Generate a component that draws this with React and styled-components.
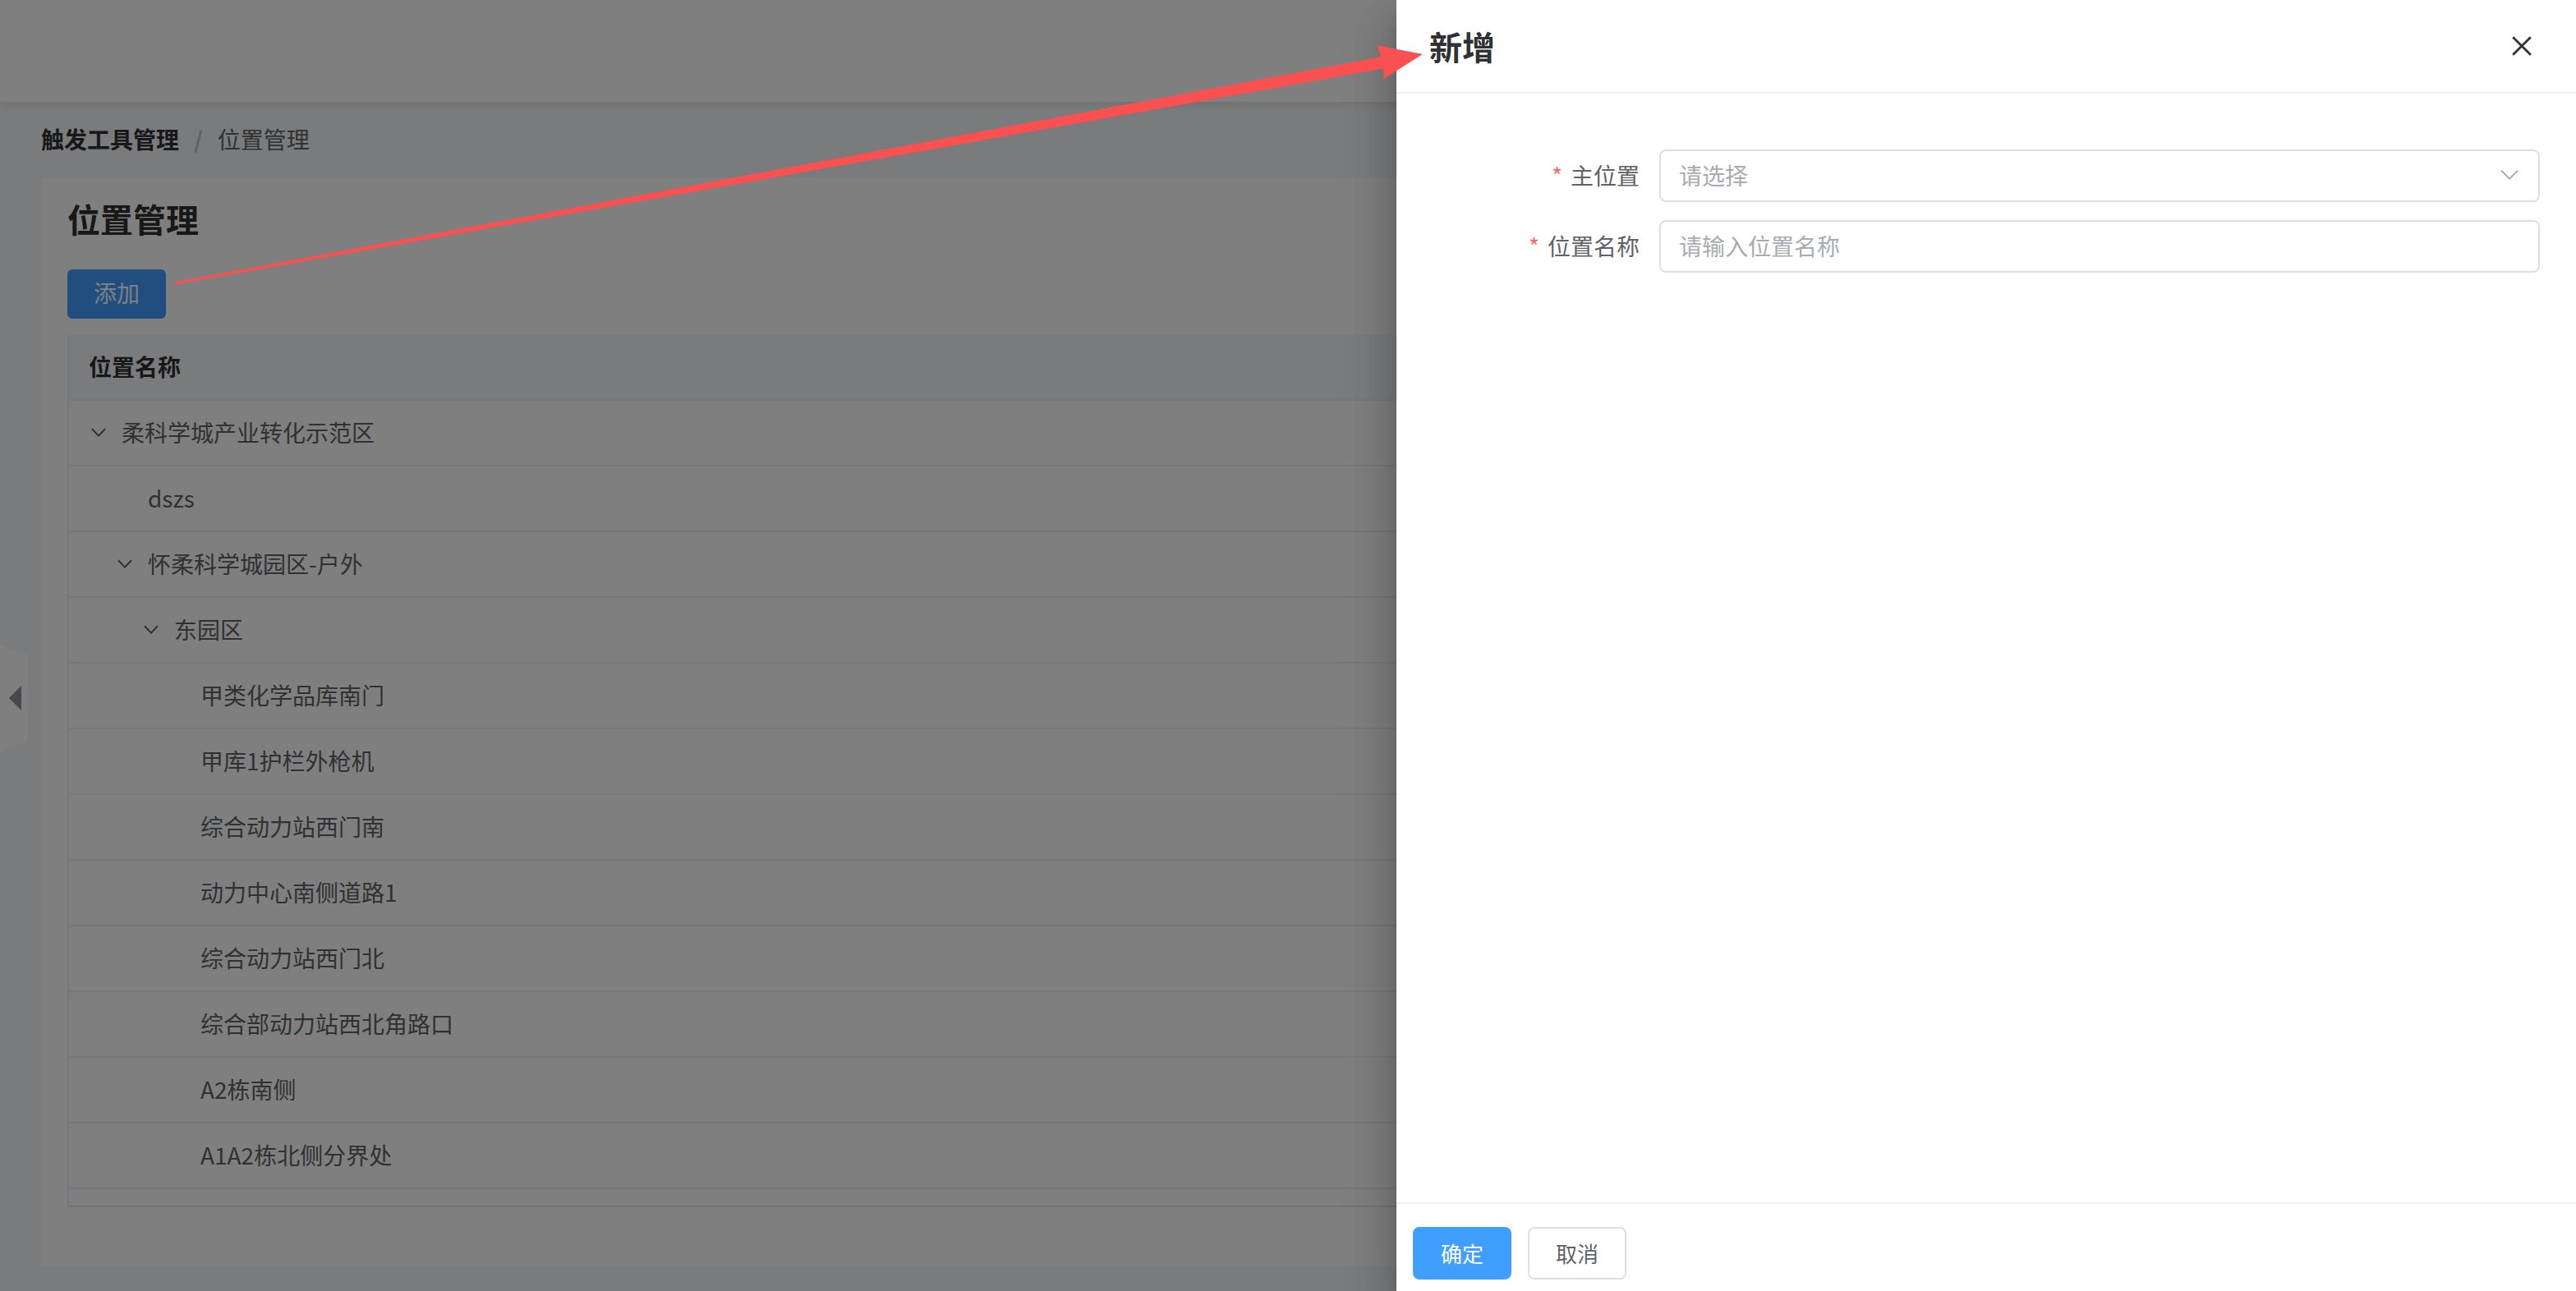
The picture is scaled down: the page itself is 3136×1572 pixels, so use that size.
import React from 'react';
import styled, { createGlobalStyle } from 'styled-components';

const GlobalStyle = createGlobalStyle`
  html, body { margin: 0; padding: 0; background: #f5f7fa; overflow: hidden; }
  #root { width: 3136px; height: 1572px; }
  *, *::before, *::after { box-sizing: border-box; }
`;

const Stage = styled.div`
  zoom: 2;
  position: relative;
  width: 1568px;
  height: 786px;
  overflow: hidden;
  background: #f5f7fa;
  font-family: "PingFang SC", "Noto Sans CJK SC", "Noto Sans", sans-serif;
  display: flex;
  flex-direction: column;
`;

const TopBar = styled.header`
  position: relative;
  z-index: 1;
  height: 62px;
  flex: none;
  background: #fff;
  box-shadow: 0 1px 6px rgba(0, 21, 41, 0.12);
`;

const Main = styled.main`
  flex: 1;
  display: flex;
  flex-direction: column;
  padding: 0 26px 15px 25px;
  min-height: 0;
`;

const Breadcrumb = styled.nav`
  height: 46px;
  flex: none;
  display: flex;
  align-items: center;
  padding-bottom: 1px;
  font-size: 14px;
`;

const Crumb = styled.span`
  color: ${(p) => (p.$current ? '#606266' : '#303133')};
  font-weight: ${(p) => (p.$current ? 400 : 700)};
`;

const Sep = styled.span`
  margin: 0 9px;
  color: #c0c4cc;
  font-weight: 700;
`;

const Card = styled.section`
  flex: 1;
  background: #fff;
  padding: 13px 15px 15px 16px;
  display: flex;
  flex-direction: column;
  min-height: 0;
`;

const Title = styled.h2`
  margin: 0;
  font-size: 20px;
  line-height: 24px;
  font-weight: 700;
  color: #303133;
`;

const Toolbar = styled.div`
  margin-top: 19px;
  display: flex;
`;

const AddButton = styled.button`
  width: 60px;
  height: 30px;
  border: none;
  border-radius: 3px;
  background: #409eff;
  color: #fff;
  font-family: inherit;
  font-size: 14px;
  padding: 0 0 2px;
`;

const Table = styled.div`
  margin-top: 10px;
  height: 531px;
  flex: none;
  overflow: hidden;
  border-left: 1px solid #ebeef5;
  border-bottom: 1px solid #e4e7ed;
  display: flex;
  flex-direction: column;
`;

const HeadCell = styled.div`
  height: 40px;
  flex: none;
  display: flex;
  align-items: center;
  padding: 0 12px 1px;
  background: #f5f7fa;
  border-bottom: 1px solid #ebeef5;
  font-size: 14px;
  font-weight: 600;
  color: #303133;
`;

const Row = styled.div`
  height: 40px;
  flex: none;
  display: flex;
  align-items: center;
  padding-left: ${(p) => 12 + p.$level * 16}px;
  padding-bottom: 1px;
  border-bottom: 1px solid #ebeef5;
  font-size: 14px;
  color: #606266;
`;

const ExpandBox = styled.span`
  width: 20px;
  height: 20px;
  flex: none;
  display: flex;
  align-items: center;
  padding-left: 1.5px;
`;

const SideHandle = styled.div`
  position: absolute;
  left: 0;
  top: 392px;
  width: 17px;
  height: 66px;
  background: #fff;
  clip-path: polygon(0 0, 100% 7px, 100% calc(100% - 7px), 0 100%);
  display: flex;
  align-items: center;
  padding-left: 5px;
`;

const Overlay = styled.div`
  position: absolute;
  inset: 0;
  z-index: 10;
  background: rgba(0, 0, 0, 0.5);
`;

const Drawer = styled.aside`
  position: absolute;
  top: 0;
  right: 0;
  z-index: 11;
  width: 718px;
  height: 786px;
  background: #fff;
  display: flex;
  flex-direction: column;
  box-shadow: 0 8px 10px -5px rgba(0, 0, 0, 0.2), 0 16px 24px 2px rgba(0, 0, 0, 0.14),
    0 6px 30px 5px rgba(0, 0, 0, 0.12);
`;

const DrawerHeader = styled.div`
  height: 57px;
  flex: none;
  display: flex;
  align-items: center;
  justify-content: space-between;
  padding: 0 27px 0 20px;
  border-bottom: 1px solid #ebeef5;
`;

const DrawerTitle = styled.h3`
  margin: 0;
  font-size: 20px;
  font-weight: 700;
  color: #303133;
  line-height: 24px;
`;

const CloseButton = styled.button`
  width: 12px;
  height: 12px;
  padding: 0;
  border: none;
  background: transparent;
  display: flex;
`;

const DrawerBody = styled.div`
  flex: 1;
  padding: 34px 22px 0 20px;
`;

const FormItem = styled.div`
  display: flex;
  height: 32px;
  margin-bottom: 11px;
`;

const Label = styled.label`
  width: 140px;
  flex: none;
  display: flex;
  justify-content: flex-end;
  align-items: center;
  padding: 0 12px 1px 0;
  font-size: 14px;
  color: #606266;
`;

const Required = styled.span`
  color: #f56c6c;
  margin-right: 5px;
  font-size: 14px;
`;

const FieldBox = styled.div`
  flex: 1;
  height: 32px;
  display: flex;
  align-items: center;
  justify-content: space-between;
  border: 1px solid #dcdfe6;
  border-radius: 4px;
  padding: 0 12px 1px 11px;
  background: #fff;
`;

const Placeholder = styled.span`
  font-size: 14px;
  color: #a8abb2;
`;

const DrawerFooter = styled.div`
  flex: none;
  display: flex;
  gap: 10px;
  padding: 14px 10px 7px;
  border-top: 1px solid #ebeef5;
`;

const FooterButton = styled.button`
  width: 60px;
  height: 32px;
  padding: 0 0 1px;
  border-radius: 4px;
  font-family: inherit;
  font-size: 13px;
  border: 1px solid ${(p) => (p.$primary ? '#409eff' : '#dcdfe6')};
  background: ${(p) => (p.$primary ? '#409eff' : '#fff')};
  color: ${(p) => (p.$primary ? '#fff' : '#606266')};
`;

const Annotation = styled.svg`
  position: absolute;
  inset: 0;
  z-index: 12;
  width: 1568px;
  height: 786px;
  pointer-events: none;
`;

const Chevron = () => (
  <svg width="9" height="5.5" viewBox="0 0 9 5.5">
    <path d="M0.5 0.6 L4.5 4.8 L8.5 0.6" fill="none" stroke="#606266" strokeWidth="1" />
  </svg>
);

const rows = [
  { level: 0, name: '柔科学城产业转化示范区', open: true },
  { level: 1, name: 'dszs' },
  { level: 1, name: '怀柔科学城园区-户外', open: true },
  { level: 2, name: '东园区', open: true },
  { level: 3, name: '甲类化学品库南门' },
  { level: 3, name: '甲库1护栏外枪机' },
  { level: 3, name: '综合动力站西门南' },
  { level: 3, name: '动力中心南侧道路1' },
  { level: 3, name: '综合动力站西门北' },
  { level: 3, name: '综合部动力站西北角路口' },
  { level: 3, name: 'A2栋南侧' },
  { level: 3, name: 'A1A2栋北侧分界处' },
  { level: 3, name: '' },
];

export default function App() {
  return (
    <>
      <GlobalStyle />
      <Stage>
        <TopBar />
        <Main>
          <Breadcrumb>
            <Crumb>触发工具管理</Crumb>
            <Sep>/</Sep>
            <Crumb $current>位置管理</Crumb>
          </Breadcrumb>
          <Card>
            <Title>位置管理</Title>
            <Toolbar>
              <AddButton>添加</AddButton>
            </Toolbar>
            <Table>
              <HeadCell>位置名称</HeadCell>
              {rows.map((r, i) => (
                <Row key={i} $level={r.level}>
                  <ExpandBox>{r.open ? <Chevron /> : null}</ExpandBox>
                  {r.name}
                </Row>
              ))}
            </Table>
          </Card>
        </Main>
        <SideHandle>
          <svg width="8" height="16" viewBox="0 0 8 16">
            <path d="M0.4 8 L8 0.5 L8 15.5 Z" fill="#909399" />
          </svg>
        </SideHandle>

        <Overlay />

        <Drawer>
          <DrawerHeader>
            <DrawerTitle>新增</DrawerTitle>
            <CloseButton aria-label="关闭">
              <svg width="12" height="12" viewBox="0 0 12 12">
                <path d="M0.6 0.6 L11.4 11.4 M11.4 0.6 L0.6 11.4" stroke="#303133" strokeWidth="1.4" />
              </svg>
            </CloseButton>
          </DrawerHeader>
          <DrawerBody>
            <FormItem>
              <Label>
                <Required>*</Required>主位置
              </Label>
              <FieldBox>
                <Placeholder>请选择</Placeholder>
                <svg width="11" height="7" viewBox="0 0 11 7">
                  <path d="M0.5 0.8 L5.5 5.8 L10.5 0.8" fill="none" stroke="#a8abb2" strokeWidth="1" />
                </svg>
              </FieldBox>
            </FormItem>
            <FormItem>
              <Label>
                <Required>*</Required>位置名称
              </Label>
              <FieldBox>
                <Placeholder>请输入位置名称</Placeholder>
              </FieldBox>
            </FormItem>
          </DrawerBody>
          <DrawerFooter>
            <FooterButton $primary>确定</FooterButton>
            <FooterButton>取消</FooterButton>
          </DrawerFooter>
        </Drawer>

        <Annotation viewBox="0 0 1568 786">
          <polygon
            points="105.9,171.8 840.6,34.6 838.3,27.6 866,33 842.2,48 842,41.8 106.1,173.2"
            fill="#f95151"
          />
        </Annotation>
      </Stage>
    </>
  );
}
